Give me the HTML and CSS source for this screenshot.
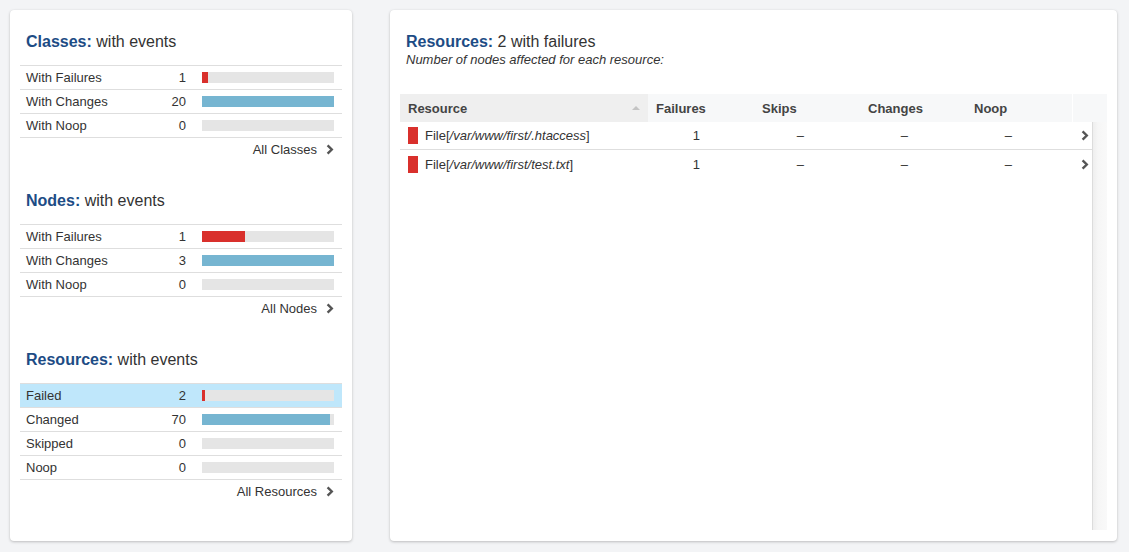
FILE: index.html
```html
<!DOCTYPE html>
<html>
<head>
<meta charset="utf-8">
<link rel="stylesheet" href="styles.css">
</head>
<body>
<div class="page">
  <div class="panel left">
    <section class="summary">
      <h2 class="title"><b>Classes:</b> with events</h2>
      <div class="stats">
        <div class="row"><span class="label">With Failures</span><span class="num">1</span><span class="bar"><span class="fill red" style="width:6px"></span></span></div>
        <div class="row"><span class="label">With Changes</span><span class="num">20</span><span class="bar"><span class="fill blue" style="width:132px"></span></span></div>
        <div class="row"><span class="label">With Noop</span><span class="num">0</span><span class="bar"></span></div>
      </div>
      <div class="more"><span>All Classes</span><svg class="chev" width="8" height="11" viewBox="0 0 8 11"><path d="M1.6 1.3 L5.8 5.5 L1.6 9.7" fill="none" stroke="#555" stroke-width="2.4"/></svg></div>
    </section>
    <section class="summary">
      <h2 class="title"><b>Nodes:</b> with events</h2>
      <div class="stats">
        <div class="row"><span class="label">With Failures</span><span class="num">1</span><span class="bar"><span class="fill red" style="width:43px"></span></span></div>
        <div class="row"><span class="label">With Changes</span><span class="num">3</span><span class="bar"><span class="fill blue" style="width:132px"></span></span></div>
        <div class="row"><span class="label">With Noop</span><span class="num">0</span><span class="bar"></span></div>
      </div>
      <div class="more"><span>All Nodes</span><svg class="chev" width="8" height="11" viewBox="0 0 8 11"><path d="M1.6 1.3 L5.8 5.5 L1.6 9.7" fill="none" stroke="#555" stroke-width="2.4"/></svg></div>
    </section>
    <section class="summary">
      <h2 class="title"><b>Resources:</b> with events</h2>
      <div class="stats">
        <div class="row active"><span class="label">Failed</span><span class="num">2</span><span class="bar"><span class="fill red" style="width:3px"></span></span></div>
        <div class="row"><span class="label">Changed</span><span class="num">70</span><span class="bar"><span class="fill blue" style="width:128px"></span></span></div>
        <div class="row"><span class="label">Skipped</span><span class="num">0</span><span class="bar"></span></div>
        <div class="row"><span class="label">Noop</span><span class="num">0</span><span class="bar"></span></div>
      </div>
      <div class="more"><span>All Resources</span><svg class="chev" width="8" height="11" viewBox="0 0 8 11"><path d="M1.6 1.3 L5.8 5.5 L1.6 9.7" fill="none" stroke="#555" stroke-width="2.4"/></svg></div>
    </section>
  </div>
  <div class="panel right">
    <h2 class="title"><b>Resources:</b> 2 with failures</h2>
    <p class="sub">Number of nodes affected for each resource:</p>
    <div class="thead">
      <div class="th th-res">Resource<span class="sort"></span></div>
      <div class="th th-num">Failures</div>
      <div class="th th-num">Skips</div>
      <div class="th th-num">Changes</div>
      <div class="th th-num">Noop</div>
      <div class="th th-fill"></div>
    </div>
    <div class="tbody-wrap">
      <div class="tbody">
        <div class="tr">
          <div class="td td-res"><span class="mark"></span><span>File[<i>/var/www/first/.htaccess</i>]</span></div>
          <div class="td td-num">1</div>
          <div class="td td-num">–</div>
          <div class="td td-num">–</div>
          <div class="td td-num">–</div>
          <div class="td td-go"><svg width="8" height="11" viewBox="0 0 8 11"><path d="M1.6 1.3 L5.8 5.5 L1.6 9.7" fill="none" stroke="#555" stroke-width="2.4"/></svg></div>
        </div>
        <div class="tr last">
          <div class="td td-res"><span class="mark"></span><span>File[<i>/var/www/first/test.txt</i>]</span></div>
          <div class="td td-num">1</div>
          <div class="td td-num">–</div>
          <div class="td td-num">–</div>
          <div class="td td-num">–</div>
          <div class="td td-go"><svg width="8" height="11" viewBox="0 0 8 11"><path d="M1.6 1.3 L5.8 5.5 L1.6 9.7" fill="none" stroke="#555" stroke-width="2.4"/></svg></div>
        </div>
      </div>
      <div class="scroll"></div>
    </div>
  </div>
</div>
</body>
</html>
```
FILE: styles.css
```css
* { box-sizing: border-box; }
html, body { margin: 0; padding: 0; }
body {
  background: #f3f4f6;
  font-family: "Liberation Sans", Arial, sans-serif;
  font-size: 13px;
  color: #333;
}
.page {
  display: flex;
  gap: 38px;
  padding: 10px;
}
.panel {
  background: #fff;
  border-radius: 4px;
  box-shadow: 0 1px 3px rgba(0,0,0,0.22), 0 0 1px rgba(0,0,0,0.08);
  height: 531px;
}
.left {
  width: 342px;
  padding: 22px 10px 0 10px;
}
.right {
  width: 727px;
  padding: 22px 10px 10px 10px;
  display: flex;
  flex-direction: column;
}
.title {
  margin: 0;
  padding-left: 6px;
  font-size: 16px;
  line-height: 20px;
  font-weight: normal;
  color: #333;
}
.title b { color: #1d4c85; font-weight: bold; }
.summary { margin-bottom: 31px; }
.summary .title { margin-bottom: 13px; }
.stats { border-top: 1px solid #dedede; }
.row {
  display: flex;
  align-items: center;
  height: 24px;
  border-bottom: 1px solid #dedede;
  padding-right: 8px;
}
.row.active { background: #bfe7fb; }
.label { flex: 1; padding-left: 6px; }
.num { width: 30px; text-align: right; }
.bar {
  width: 132px;
  height: 11px;
  margin-left: 16px;
  background: #e5e5e5;
  display: flex;
}
.fill { height: 100%; display: block; }
.fill.red { background: #d9302c; }
.fill.blue { background: #76b5d1; }
.more {
  display: flex;
  justify-content: flex-end;
  align-items: center;
  height: 22px;
  padding-right: 8px;
  gap: 9px;
}
.chev { display: block; }
.sub {
  margin: 0 0 26px 0;
  padding-left: 6px;
  font-size: 13px;
  line-height: 16px;
  font-style: italic;
  color: #333;
}
.thead {
  display: flex;
  height: 28px;
  background: #f7f8f9;
}
.th {
  display: flex;
  align-items: center;
  padding-left: 8px;
  font-weight: bold;
  color: #444;
}
.th-res {
  width: 248px;
  background: #efefef;
  position: relative;
}
.sort {
  position: absolute;
  right: 8px;
  top: 12px;
  width: 0;
  height: 0;
  border-left: 4px solid transparent;
  border-right: 4px solid transparent;
  border-bottom: 4px solid #c4c4c4;
}
.th-num { width: 106px; }
.th-fill { width: 35px; border-left: 1px solid #fff; }
.tbody-wrap {
  display: flex;
  height: 408px;
}
.tbody { width: 692px; }
.scroll {
  width: 15px;
  border-left: 1px solid #dcdcdc;
  background: linear-gradient(to right, #eeeeee, #f6f6f6 5px, #f9f9f9);
}
.tr {
  display: flex;
  height: 28px;
  border-bottom: 1px solid #dedede;
  align-items: center;
}
.tr.last { border-bottom: none; }
.td-res {
  width: 248px;
  padding-left: 8px;
  display: flex;
  align-items: center;
  gap: 7px;
}
.mark {
  width: 10px;
  height: 17px;
  background: #d9302c;
  display: block;
}
.td-num {
  width: 104px;
  text-align: right;
  padding-right: 52px;
}
.td-go {
  width: 28px;
  display: flex;
  justify-content: flex-end;
  padding-right: 3px;
}
```
